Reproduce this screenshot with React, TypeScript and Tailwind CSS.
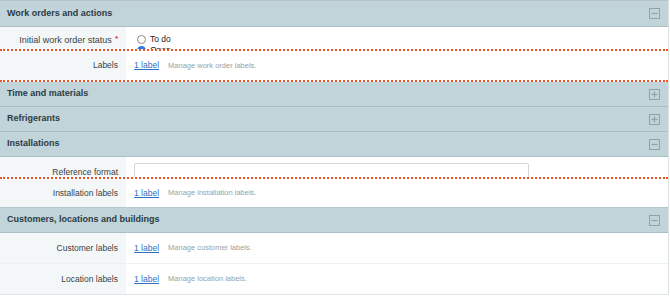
import React from 'react'

function ToggleIcon({ open }: { open: boolean }) {
    return (
        <svg width="11" height="11" viewBox="0 0 11 11" className="shrink-0">
            <rect x="0.5" y="0.5" width="10" height="10" fill="none" stroke="#8fa3aa" strokeWidth="1" />
            <line x1="2.5" y1="5.5" x2="8.5" y2="5.5" stroke="#8fa3aa" strokeWidth="1.2" />
            {!open && <line x1="5.5" y1="2.5" x2="5.5" y2="8.5" stroke="#8fa3aa" strokeWidth="1.2" />}
        </svg>
    )
}

function SectionHeader({ title, open, h = 'h-[24px]' }: { title: string; open: boolean; h?: string }) {
    return (
        <div className={`${h} flex items-center justify-between bg-[#c0d4d9] border-b border-[#a9bec5] pl-[7px] pr-[8px]`}>
            <span className="text-[9px] font-bold text-[#2c3a44]">{title}</span>
            <ToggleIcon open={open} />
        </div>
    )
}

function Cut() {
    return <div className="h-[2px] border-t-2 border-dotted border-[#f0522a]" />
}

function LabelRow({ label, help, h }: { label: string; help: string; h: string }) {
    return (
        <div className={`${h} flex`}>
            <div className="w-[126px] shrink-0 bg-[#f3f7f8] flex items-center justify-end pr-[8px]">
                <span className="text-[8.5px] text-[#3a3f44]">{label}</span>
            </div>
            <div className="flex-1 bg-white flex items-center pl-[8px] gap-[9px]">
                <a className="text-[8.5px] text-[#2f6fc4] underline">1 label</a>
                <span className="text-[7.5px] text-[#9a9fa3]">{help}</span>
            </div>
        </div>
    )
}

export default function App() {
    return (
        <div className="w-[670px] h-[296px] bg-white overflow-hidden font-['Liberation_Sans',Arial,sans-serif]">
            <div className="w-[669px] border-t border-[#b6c4ca] border-r border-r-[#d8e2e5]">
                <SectionHeader title="Work orders and actions" open h="h-[26px]" />

                {/* Work order status (cut off) */}
                <div className="h-[22px] flex overflow-hidden">
                    <div className="w-[126px] shrink-0 bg-[#f3f7f8] flex items-start justify-end pr-[8px] pt-[7px]">
                        <span className="text-[9px] text-[#3a3f44]">Initial work order status</span>
                        <span className="text-[8px] font-bold text-[#d3245a] ml-[3px] leading-[10px]">*</span>
                    </div>
                    <div className="flex-1 bg-white pl-[11px] pt-[7px] flex flex-col gap-[1px]">
                        <label className="h-[10px] flex items-center gap-[4px] text-[8.5px] leading-[10px] text-[#222]">
                            <span className="w-[9px] h-[9px] rounded-full border border-[#8a8a8a] bg-white" />
                            To do
                        </label>
                        <label className="h-[10px] flex items-center gap-[4px] text-[8.5px] leading-[10px] text-[#222]">
                            <span className="w-[9px] h-[9px] rounded-full bg-[#2f7be5] flex items-center justify-center">
                                <span className="w-[3px] h-[3px] rounded-full bg-white" />
                            </span>
                            Open
                        </label>
                    </div>
                </div>
                <Cut />
                <LabelRow label="Labels" help="Manage work order labels." h="h-[29px]" />
                <Cut />

                <SectionHeader title="Time and materials" open={false} h="h-[25px]" />
                <SectionHeader title="Refrigerants" open={false} h="h-[25px]" />
                <SectionHeader title="Installations" open h="h-[25px]" />

                {/* Reference format (cut off) */}
                <div className="h-[20px] flex overflow-hidden">
                    <div className="w-[126px] shrink-0 bg-[#f3f7f8] flex items-start justify-end pr-[8px] pt-[9px]">
                        <span className="text-[8.5px] text-[#3a3f44]">Reference format</span>
                    </div>
                    <div className="flex-1 bg-white pl-[8px] pt-[6px]">
                        <div className="w-[395px] h-[22px] border border-[#d6d6d6] rounded-[2px] bg-white" />
                    </div>
                </div>
                <Cut />
                <LabelRow label="Installation labels" help="Manage installation labels." h="h-[28px]" />

                <div className="border-t border-[#b6c8ce]">
                    <SectionHeader title="Customers, locations and buildings" open h="h-[25px]" />
                </div>
                <div className="border-b border-[#eef2f3]">
                    <LabelRow label="Customer labels" help="Manage customer labels." h="h-[30px]" />
                </div>
                <div className="border-b border-[#dfe5e8]">
                    <LabelRow label="Location labels" help="Manage location labels." h="h-[30px]" />
                </div>
            </div>
        </div>
    )
}
